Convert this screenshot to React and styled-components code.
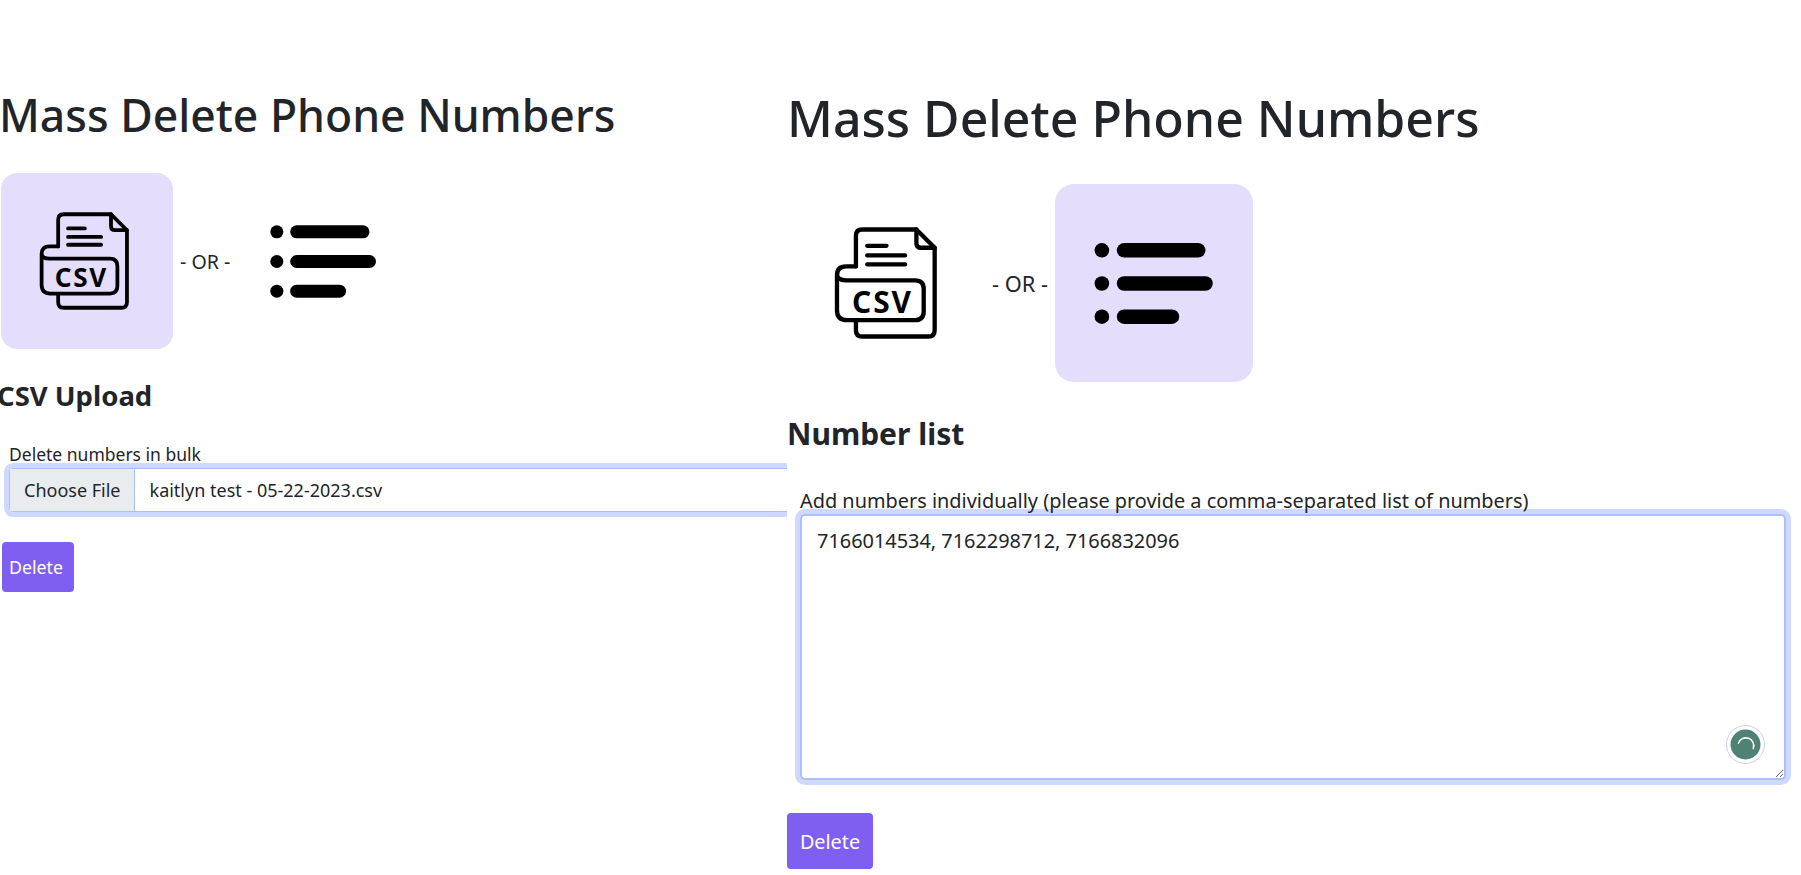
import styled, { createGlobalStyle } from 'styled-components';

const GlobalStyle = createGlobalStyle`
  html, body {
    margin: 0;
    background: #fff;
    color: #212529;
    font-family: "Noto Sans", "Open Sans", sans-serif;
  }
  * {
    box-sizing: border-box;
  }
`;

const Page = styled.div`
  display: flex;
  align-items: flex-start;
  width: 1801px;
  height: 875px;
  overflow: hidden;
`;

const Panel = styled.section`
  flex: ${(p) => (p.$large ? '1' : '0 0 787px')};
  min-width: 0;
  overflow: ${(p) => (p.$large ? 'visible' : 'hidden')};
  padding-top: ${(p) => (p.$large ? '84px' : '85px')};
`;

const Title = styled.h1`
  margin: ${(p) => (p.$large ? '0' : '0 0 0 -1px')};
  font-size: ${(p) => (p.$large ? '50px' : '44.5px')};
  font-weight: 500;
  line-height: ${(p) => (p.$large ? '68px' : '60px')};
  white-space: nowrap;
`;

const Choices = styled.div`
  display: flex;
  align-items: center;
  gap: 7px;
  margin-top: ${(p) => (p.$large ? '32px' : '28px')};
  padding-left: ${(p) => (p.$large ? '0' : '1px')};
`;

const Tile = styled.div`
  display: flex;
  align-items: center;
  justify-content: center;
  width: ${(p) => (p.$large ? '198px' : '172px')};
  height: ${(p) => (p.$large ? '198px' : '176px')};
  padding-right: ${(p) => p.$inset || 0}px;
  border-radius: ${(p) => (p.$large ? '19px' : '16px')};
  background: ${(p) => (p.$active ? '#e4ddfc' : 'transparent')};
`;

const OrText = styled.span`
  font-size: ${(p) => (p.$large ? '21.8px' : '19.6px')};
  white-space: nowrap;
`;

const Subtitle = styled.h3`
  margin: ${(p) => (p.$large ? '32px 0 0' : '29px 0 0 -3px')};
  font-size: ${(p) => (p.$large ? '30px' : '27.5px')};
  font-weight: 700;
  line-height: ${(p) => (p.$large ? '40px' : '36px')};
`;

const FieldLabel = styled.label`
  position: relative;
  z-index: 1;
  display: block;
  margin: ${(p) => (p.$large ? '35px 0 0 13px' : '28px 0 0 9px')};
  font-size: ${(p) => (p.$large ? '19.9px' : '17.5px')};
  line-height: 24px;
  white-space: nowrap;
`;

const FileField = styled.div`
  display: flex;
  align-items: stretch;
  width: 820px;
  height: 44px;
  margin: 2px 0 0 9px;
  border: 1px solid #a9c0fb;
  border-radius: 4px;
  background: #fff;
  box-shadow: 0 0 0 5px #cfd9ff;
  font-size: 18px;
`;

const FileButton = styled.span`
  display: flex;
  align-items: center;
  padding: 0 13px 0 14px;
  border-right: 1px solid #a9c0fb;
  background: #e9ecef;
`;

const FileName = styled.span`
  display: flex;
  align-items: center;
  padding: 0 15px;
`;

const NumbersWrap = styled.div`
  position: relative;
  width: 986px;
  margin: 1px 0 0 13px;
`;

const NumbersInput = styled.textarea`
  display: block;
  width: 100%;
  height: 266px;
  padding: 11px 15px;
  border: 2px solid #a9c0fb;
  border-radius: 5px;
  outline: none;
  box-shadow: 0 0 0 5px #cfd9ff;
  color: #212529;
  font-family: inherit;
  font-size: 19.9px;
  line-height: 28px;
`;

const GrammarBadge = styled.span`
  position: absolute;
  right: 21px;
  bottom: 16px;
  display: flex;
  align-items: center;
  justify-content: center;
  width: 39px;
  height: 39px;
  border: 1px solid #cfd3e2;
  border-radius: 50%;
  background: #fff;
`;

const DeleteButton = styled.button`
  display: block;
  height: ${(p) => (p.$large ? '56px' : '50px')};
  width: ${(p) => (p.$large ? '86px' : '72px')};
  margin: ${(p) => (p.$large ? '33px 0 0' : '30px 0 0 2px')};
  padding: ${(p) => (p.$large ? '0' : '0 4px 0 0')};
  border: 0;
  border-radius: 4px;
  background: #7f5ff2;
  color: #fff;
  font-family: inherit;
  font-size: ${(p) => (p.$large ? '19.8px' : '17.8px')};
`;

function CsvIcon({ width, height }) {
  return (
    <svg width={width} height={height} viewBox="160 170 310 336" fill="none" stroke="#000" strokeWidth="13" strokeLinecap="round" strokeLinejoin="round">
      <path d="M226 288V196Q226 177 245 177H408L463 232V480Q463 499 444 499H245Q226 499 226 480V452" />
      <path d="M408 177V218Q408 232 422 232H463" />
      <path d="M260 226H318M260 255H374M260 282H374" />
      <path d="M226 288H196Q169 288 169 315V420Q169 450 199 450H404Q430 450 430 424V356Q430 330 404 330H196Q169 330 169 312" />
      <text x="306" y="428" textAnchor="middle" fill="#000" stroke="none" fontFamily="'Noto Sans', sans-serif" fontSize="90" fontWeight="700" letterSpacing="6">CSV</text>
    </svg>
  );
}

function ListIcon({ width, height }) {
  return (
    <svg width={width} height={height} viewBox="942 216 357 244" fill="#000">
      <circle cx="965" cy="238" r="22" />
      <circle cx="965" cy="338" r="22" />
      <circle cx="965" cy="438" r="22" />
      <rect x="1010" y="216" width="267" height="44" rx="22" />
      <rect x="1010" y="316" width="289" height="44" rx="22" />
      <rect x="1010" y="416" width="188" height="44" rx="22" />
    </svg>
  );
}

function CsvUploadPanel() {
  return (
    <Panel>
      <Title>Mass Delete Phone Numbers</Title>
      <Choices>
        <Tile $active $inset={6}>
          <CsvIcon width={90} height={98} />
        </Tile>
        <OrText>- OR -</OrText>
        <Tile>
          <ListIcon width={106} height={73} />
        </Tile>
      </Choices>
      <Subtitle>CSV Upload</Subtitle>
      <FieldLabel>Delete numbers in bulk</FieldLabel>
      <FileField>
        <FileButton>Choose File</FileButton>
        <FileName>kaitlyn test - 05-22-2023.csv</FileName>
      </FileField>
      <DeleteButton>Delete</DeleteButton>
    </Panel>
  );
}

function NumberListPanel() {
  return (
    <Panel $large>
      <Title $large>Mass Delete Phone Numbers</Title>
      <Choices $large>
        <Tile $large $inset={2}>
          <CsvIcon width={103} height={112} />
        </Tile>
        <OrText $large>- OR -</OrText>
        <Tile $large $active>
          <ListIcon width={119} height={81} />
        </Tile>
      </Choices>
      <Subtitle $large>Number list</Subtitle>
      <FieldLabel $large>Add numbers individually (please provide a comma-separated list of numbers)</FieldLabel>
      <NumbersWrap>
        <NumbersInput defaultValue="7166014534, 7162298712, 7166832096" />
        <GrammarBadge>
          <svg width="33" height="33" viewBox="0 0 33 33">
            <circle cx="16.5" cy="16.5" r="15" fill="#4f8174" />
            <path d="M9.5 15A7.5 7.5 0 0 1 24.3 20.5" fill="none" stroke="#fff" strokeWidth="1.6" strokeLinecap="round" />
          </svg>
        </GrammarBadge>
      </NumbersWrap>
      <DeleteButton $large>Delete</DeleteButton>
    </Panel>
  );
}

export default function App() {
  return (
    <Page>
      <GlobalStyle />
      <CsvUploadPanel />
      <NumberListPanel />
    </Page>
  );
}
